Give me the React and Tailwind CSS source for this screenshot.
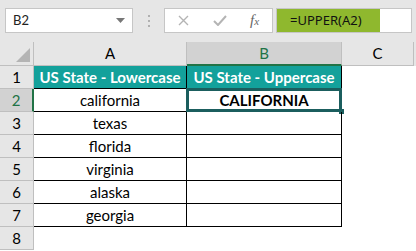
import React from "react";

const rows = ["california", "texas", "florida", "virginia", "alaska", "georgia"];

function RowHead({ n, active }) {
  return (
    <div
      className={`w-[34px] shrink-0 flex items-center justify-center border-r border-b border-[#bfbfbf] text-[15px] ${
        active ? "bg-[#d2d2d2] text-[#217346] border-r-2 border-r-[#217346]" : "bg-[#e6e6e6] text-black"
      }`}
    >
      {n}
    </div>
  );
}

export default function App() {
  return (
    <div className="w-[416px] h-[251px] overflow-hidden bg-white" style={{ fontFamily: "Lato, 'Open Sans', sans-serif" }}>
      {/* Formula bar */}
      <div className="h-[42px] bg-[#e6e6e6] flex items-start pt-[8px] pl-[5px]">
        <div className="w-[128px] h-[25px] bg-white border border-[#c6c6c6] flex items-center justify-between pl-[7px] pr-[7px] text-[13px] text-[#222]">
          <span>B2</span>
          <svg width="9" height="5" viewBox="0 0 9 5"><path d="M0 0h9L4.5 5z" fill="#777" /></svg>
        </div>
        <div className="w-[31px] h-[25px] flex flex-col items-center justify-center gap-[3px]">
          <span className="w-[2px] h-[2px] bg-[#b0b0b0]" />
          <span className="w-[2px] h-[2px] bg-[#b0b0b0]" />
          <span className="w-[2px] h-[2px] bg-[#b0b0b0]" />
        </div>
        <div className="w-[109px] h-[25px] bg-white border border-[#c6c6c6] flex items-center">
          <svg className="ml-[13px]" width="11" height="11" viewBox="0 0 11 11">
            <path d="M1 1l9 9M10 1l-9 9" stroke="#b4b4b4" strokeWidth="1.4" />
          </svg>
          <svg className="ml-[24px]" width="14" height="11" viewBox="0 0 14 11">
            <path d="M1 6l4 4 8-9" stroke="#b4b4b4" strokeWidth="2" fill="none" />
          </svg>
          <span className="ml-[23px] text-[15px] italic text-[#666]" style={{ fontFamily: "'Liberation Serif', serif" }}>
            f<span className="text-[11px]">x</span>
          </span>
        </div>
        <div className="ml-[3px] w-[136px] h-[25px] bg-white border border-[#c6c6c6] flex">
          <div className="w-[103px] h-full bg-[#8fb82e] flex items-center pl-[13px] text-[13px] text-[#111]" style={{ fontFamily: "'Noto Sans', sans-serif" }}>
            =UPPER(A2)
          </div>
        </div>
      </div>

      {/* Column headers */}
      <div className="h-[24px] flex">
        <div className="w-[34px] shrink-0 bg-[#e6e6e6] border-r border-b border-[#bfbfbf] relative">
          <svg className="absolute right-[3px] bottom-[3px]" width="14" height="14" viewBox="0 0 14 14">
            <path d="M14 0v14H0z" fill="#b4b4b4" />
          </svg>
        </div>
        <div className="w-[153px] shrink-0 bg-[#e6e6e6] border-r border-b border-[#bfbfbf] flex items-center justify-center text-[15px]">A</div>
        <div className="w-[155px] shrink-0 bg-[#d2d2d2] border-r border-[#bfbfbf] border-b-2 border-b-[#217346] flex items-center justify-center text-[15px] text-[#217346]">B</div>
        <div className="w-[72px] shrink-0 bg-[#e6e6e6] border-r border-b border-[#bfbfbf] flex items-center justify-center text-[15px]">C</div>
        <div className="flex-1 bg-[#e6e6e6]" />
      </div>

      {/* Header row */}
      <div className="h-[23px] flex">
        <RowHead n={1} />
        <div className="w-[153px] shrink-0 bg-[#13a19b] border-r border-b border-black flex items-center justify-center text-white font-bold text-[15px]">
          US State - Lowercase
        </div>
        <div className="w-[155px] shrink-0 bg-[#13a19b] border-r border-b border-black flex items-center justify-center text-white font-bold text-[15px]">
          US State - Uppercase
        </div>
      </div>

      {rows.map((r, i) => (
        <div key={r} className="h-[23px] flex">
          <RowHead n={i + 2} active={i === 0} />
          <div className="w-[153px] shrink-0 border-r border-b border-black flex items-center justify-center text-[15px] text-black">
            {r}
          </div>
          <div className="w-[155px] shrink-0 border-r border-b border-black relative flex items-center justify-center text-[15px] font-bold">
            {i === 0 && (
              <>
                <div className="absolute -left-[1px] -top-[1px] w-[156px] h-[24px] border-[3px] border-[#1b5e5e]" />
                <div className="absolute -right-[3px] -bottom-[3px] w-[5px] h-[5px] bg-[#1b5e5e]" />
                <span className="relative">CALIFORNIA</span>
              </>
            )}
          </div>
        </div>
      ))}

      <div className="h-[23px] flex">
        <RowHead n={8} />
      </div>
    </div>
  );
}
